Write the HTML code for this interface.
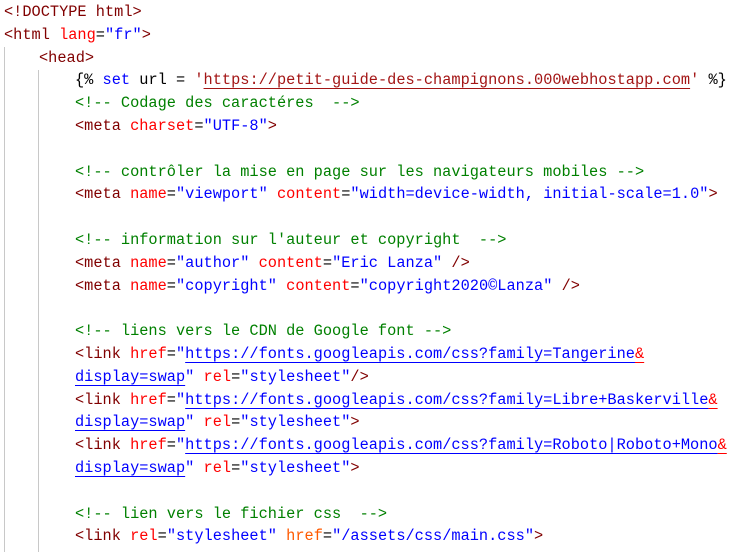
<!DOCTYPE html>
<html><head><style>
body{margin:0;background:#fff;width:751px;height:552px;overflow:hidden;position:relative}
.c{position:absolute;left:4px;top:1px;font-family:"Liberation Mono",monospace;font-size:15.3px;line-height:22.8px;white-space:pre;color:#000}
.t{color:#800000}.a{color:#ff0000}.v{color:#0000ff}.g{color:#008000}.k{color:#0000ff}.s{color:#a31515}.o{color:#ff5a00}
.u{text-decoration:underline;text-decoration-color:#0000ff;text-underline-offset:4px}
.us{text-decoration:underline;text-decoration-color:#a31515;text-underline-offset:4px}
.ur{text-decoration:underline;text-decoration-color:#ff0000;text-underline-offset:4px}
.guide{position:absolute;width:1px;background:#c8c8c8}
i{display:inline-block;width:71px}
b{display:inline-block;width:35px;font-weight:normal}
</style></head><body>
<div class="guide" style="left:4px;top:47px;height:505px"></div>
<div class="guide" style="left:38px;top:70px;height:482px"></div>
<div class="c"><span class="t">&lt;!DOCTYPE html&gt;</span>
<span class="t">&lt;html </span><span class="a">lang</span>=<span class="v">"fr"</span><span class="t">&gt;</span>
<b></b><span class="t">&lt;head&gt;</span>
<i></i>{% <span class="k">set</span> url = <span class="s">'<span class="us">https://petit-guide-des-champignons.000webhostapp.com</span>'</span> %}
<i></i><span class="g">&lt;!-- Codage des caractéres  --&gt;</span>
<i></i><span class="t">&lt;meta </span><span class="a">charset</span>=<span class="v">"UTF-8"</span><span class="t">&gt;</span>

<i></i><span class="g">&lt;!-- contrôler la mise en page sur les navigateurs mobiles --&gt;</span>
<i></i><span class="t">&lt;meta </span><span class="a">name</span>=<span class="v">"viewport"</span> <span class="a">content</span>=<span class="v">"width=device-width, initial-scale=1.0"</span><span class="t">&gt;</span>

<i></i><span class="g">&lt;!-- information sur l'auteur et copyright  --&gt;</span>
<i></i><span class="t">&lt;meta </span><span class="a">name</span>=<span class="v">"author"</span> <span class="a">content</span>=<span class="v">"Eric Lanza"</span> <span class="t">/&gt;</span>
<i></i><span class="t">&lt;meta </span><span class="a">name</span>=<span class="v">"copyright"</span> <span class="a">content</span>=<span class="v">"copyright2020©Lanza"</span> <span class="t">/&gt;</span>

<i></i><span class="g">&lt;!-- liens vers le CDN de Google font --&gt;</span>
<i></i><span class="t">&lt;link </span><span class="a">href</span>=<span class="v">"<span class="u">https://fonts.googleapis.com/css?family=Tangerine</span></span><span class="a ur">&amp;</span>
<i></i><span class="v"><span class="u">display=swap</span>"</span> <span class="a">rel</span>=<span class="v">"stylesheet"</span><span class="t">/&gt;</span>
<i></i><span class="t">&lt;link </span><span class="a">href</span>=<span class="v">"<span class="u">https://fonts.googleapis.com/css?family=Libre+Baskerville</span></span><span class="a ur">&amp;</span>
<i></i><span class="v"><span class="u">display=swap</span>"</span> <span class="a">rel</span>=<span class="v">"stylesheet"</span><span class="t">&gt;</span>
<i></i><span class="t">&lt;link </span><span class="a">href</span>=<span class="v">"<span class="u">https://fonts.googleapis.com/css?family=Roboto|Roboto+Mono</span></span><span class="a ur">&amp;</span>
<i></i><span class="v"><span class="u">display=swap</span>"</span> <span class="a">rel</span>=<span class="v">"stylesheet"</span><span class="t">&gt;</span>

<i></i><span class="g">&lt;!-- lien vers le fichier css  --&gt;</span>
<i></i><span class="t">&lt;link </span><span class="a">rel</span>=<span class="v">"stylesheet"</span> <span class="o">href</span>=<span class="v">"/assets/css/main.css"</span><span class="t">&gt;</span></div>
</body></html>
